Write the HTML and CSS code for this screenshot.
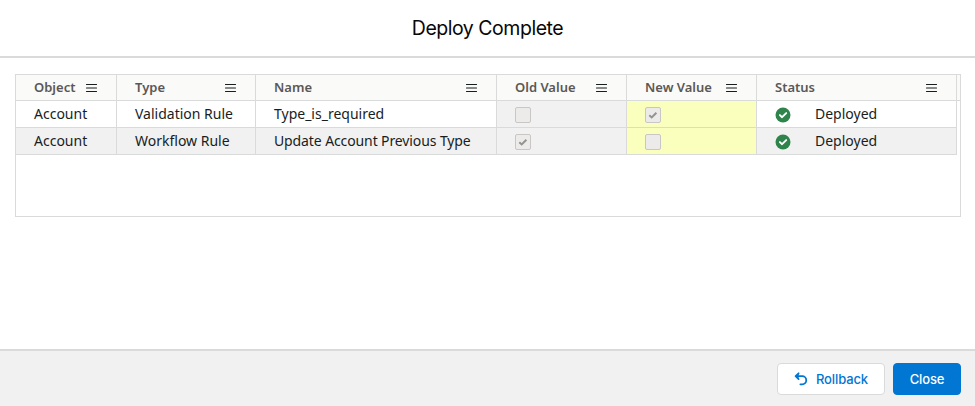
FILE: index.html
```html
<!DOCTYPE html>
<html lang="en">
<head>
<meta charset="utf-8">
<title>Deploy Complete</title>
<link rel="stylesheet" href="styles.css">
</head>
<body>
<svg class="defs" width="0" height="0">
  <symbol id="menu" viewBox="0 0 11 8"><path d="M.5 .5h10M.5 4h10M.5 7.5h10" fill="none" stroke="#181d1f" stroke-width="1.1" stroke-linecap="round"/></symbol>
  <symbol id="tick" viewBox="0 0 10 8"><path d="M1.3 4.3 3.7 6.4 8.4 1.7" fill="none" stroke="#939393" stroke-width="2"/></symbol>
  <symbol id="success" viewBox="0 0 16 16"><circle cx="8" cy="8" r="7.5" fill="#2e844a"/><path d="M4.9 8.1 7.1 10.2 11.2 6.1" fill="none" stroke="#fff" stroke-width="1.9" stroke-linecap="round" stroke-linejoin="round"/></symbol>
</svg>
<div class="modal">
  <header class="modal-header"><h1>Deploy Complete</h1></header>
  <main class="modal-body">
    <div class="grid">
      <div class="row head">
        <div class="cell"><span>Object</span><svg class="menu"><use href="#menu"/></svg></div>
        <div class="cell"><span>Type</span><svg class="menu"><use href="#menu"/></svg></div>
        <div class="cell"><span>Name</span><svg class="menu"><use href="#menu"/></svg></div>
        <div class="cell"><span>Old Value</span><svg class="menu"><use href="#menu"/></svg></div>
        <div class="cell"><span>New Value</span><svg class="menu"><use href="#menu"/></svg></div>
        <div class="cell"><span>Status</span><svg class="menu"><use href="#menu"/></svg></div>
      </div>
      <div class="row">
        <div class="cell">Account</div>
        <div class="cell">Validation Rule</div>
        <div class="cell">Type_is_required</div>
        <div class="cell old"><span class="check"></span></div>
        <div class="cell new"><span class="check"><svg><use href="#tick"/></svg></span></div>
        <div class="cell status"><svg class="success"><use href="#success"/></svg>Deployed</div>
      </div>
      <div class="row even">
        <div class="cell">Account</div>
        <div class="cell">Workflow Rule</div>
        <div class="cell long">Update Account Previous Type</div>
        <div class="cell old"><span class="check"><svg><use href="#tick"/></svg></span></div>
        <div class="cell new"><span class="check"></span></div>
        <div class="cell status"><svg class="success"><use href="#success"/></svg>Deployed</div>
      </div>
    </div>
  </main>
  <footer class="modal-footer">
    <button class="btn neutral"><svg class="undo" viewBox="0 0 14 14"><path d="M4.6 1.3 1.6 4.2 4.6 7.1M2 4.2H8.2a4 4 0 0 1 0 8.1H6.4" fill="none" stroke="#0176d3" stroke-width="1.8" stroke-linecap="round" stroke-linejoin="round"/><path d="M4.6 1.3 1.6 4.2 4.6 7.1Z" fill="#0176d3"/></svg><span>Rollback</span></button>
    <button class="btn brand"><span>Close</span></button>
  </footer>
</div>
</body>
</html>
```
FILE: styles.css
```css
* { box-sizing: border-box; }
body { margin: 0; background: #fff; font-family: Inter, sans-serif; }
.defs { display: block; }
.modal { height: 406px; display: flex; flex-direction: column; }
.modal-header {
  height: 58px;
  border-bottom: 2px solid #dadada;
  text-align: center;
}
h1 {
  margin: 0;
  font-size: 19.5px;
  font-weight: 400;
  line-height: 56px;
  letter-spacing: -.48px;
  color: #080707;
}
.modal-body { flex: 1; padding: 16px 14px 0 15px; }
.grid {
  height: 143px;
  border: 1px solid #dadada;
  font-family: "Noto Sans", sans-serif;
  font-size: 14px;
  color: #181d1f;
}
.row {
  display: grid;
  grid-template-columns: 101px 139px 241px 130px 130px 200px;
  height: 27px;
  width: 941px;
  border-bottom: 1px solid #d9dada;
}
.row.head {
  height: 26px;
  width: auto;
  background: #fafaf9;
  color: #5a5856;
  font-size: 13px;
  font-weight: 600;
}
.row.even { background: #f1f1f1; }
.cell {
  display: flex;
  align-items: center;
  padding: 0 18px;
  border-right: 1px solid #dadada;
  line-height: 26px;
  white-space: nowrap;
}
.long { letter-spacing: -.11px; }
.head .cell { justify-content: space-between; padding-right: 19px; line-height: 25px; }
.old { background: #f1f1f1; }
.new { background: #faffbd; }
.menu { width: 11px; height: 8px; flex: none; overflow: visible; }
.check {
  display: flex;
  align-items: center;
  justify-content: center;
  width: 16px;
  height: 16px;
  margin-top: 2px;
  border: 1px solid #c9c7c5;
  border-radius: 2px;
  background: #ecebea;
}
.check svg { width: 10px; height: 8px; }
.success { width: 16px; height: 16px; margin: 2px 24px 0 0; }
.modal-footer {
  height: 57px;
  padding: 12px 14px 0 0;
  border-top: 2px solid #dadada;
  background: #f1f1f1;
  display: flex;
  justify-content: flex-end;
  gap: 8px;
}
.btn {
  height: 32px;
  padding: 0;
  border-radius: 4px;
  font: 500 13px Inter, sans-serif;
  letter-spacing: -.12px;
  display: flex;
  align-items: center;
  justify-content: center;
}
.neutral {
  width: 108px;
  border: 1px solid #dadada;
  background: #fff;
  color: #0176d3;
  gap: 8px;
}
.brand {
  width: 68px;
  border: 1px solid #0176d3;
  background: #0176d3;
  color: #fff;
}
.undo { width: 14px; height: 14px; }
```
